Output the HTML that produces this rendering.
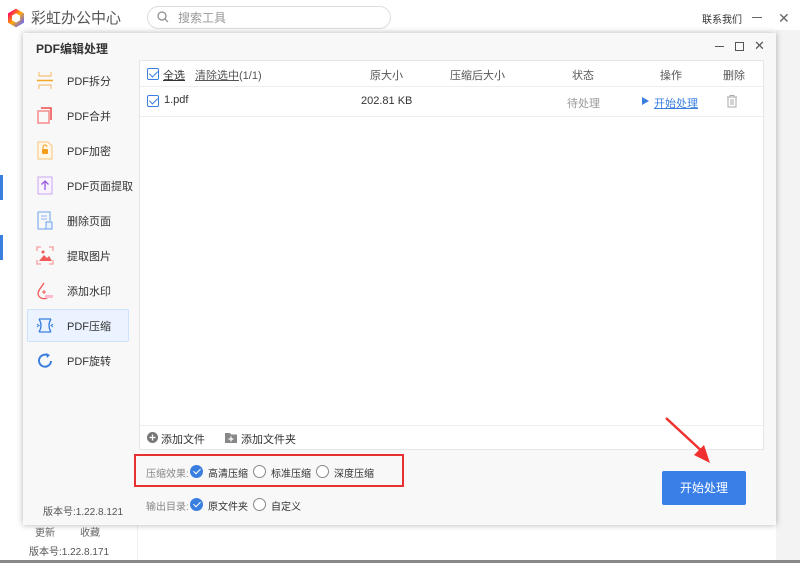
<!DOCTYPE html>
<html><head><meta charset="utf-8"><style>
*{margin:0;padding:0;box-sizing:border-box}
body{width:800px;height:563px;overflow:hidden;background:#fff;font-family:"Liberation Sans","Noto Sans CJK SC",sans-serif;font-size:11px;color:#333;position:relative}
.a{position:absolute;white-space:nowrap}
.cb{position:absolute;width:12px;height:12px;border:1px solid #3a7fe0;border-radius:2px;background:#fff}
.cb:after{content:"";position:absolute;left:3px;top:0px;width:4px;height:7px;border:solid #3a7fe0;border-width:0 1.5px 1.5px 0;transform:rotate(45deg)}
.rc{position:absolute;width:13px;height:13px;border-radius:50%;background:#3a7fe0}
.rc:after{content:"";position:absolute;left:4.5px;top:2px;width:3px;height:6px;border:solid #fff;border-width:0 1.5px 1.5px 0;transform:rotate(45deg)}
.ro{position:absolute;width:13px;height:13px;border-radius:50%;border:1px solid #888;background:#fff}
.it{position:absolute;left:27px;width:102px;height:33px}
.it span{position:absolute;left:40px;top:9px;font-size:11px;color:#333;white-space:nowrap}
.ic{position:absolute;left:9px;top:7px;width:18px;height:19px}
</style></head><body>
<svg class="a" style="left:6px;top:8px" width="20" height="20" viewBox="0 0 20 20"><path d="M10 3 L16 6.5 L16 13.5 L10 17 L4 13.5 L4 6.5Z" fill="none" stroke="url(#g)" stroke-width="4"/><defs><linearGradient id="g" x1="0" y1="0" x2="1" y2="1"><stop offset="0" stop-color="#f06"/><stop offset=".5" stop-color="#fa0"/><stop offset="1" stop-color="#66f"/></linearGradient></defs></svg>
<div class="a" style="left:31px;top:7px;font-size:15px;color:#555">彩虹办公中心</div>
<div class="a" style="left:147px;top:6px;width:244px;height:23px;border:1px solid #ddd;border-radius:12px"></div>
<svg class="a" style="left:157px;top:11px" width="12" height="12"><circle cx="5" cy="5" r="4" fill="none" stroke="#888" stroke-width="1.2"/><line x1="8" y1="8" x2="11" y2="11" stroke="#888" stroke-width="1.2"/></svg>
<div class="a" style="left:178px;top:9px;font-size:12px;color:#999">搜索工具</div>
<div class="a" style="left:702px;top:11px;font-size:10px;color:#333">联系我们</div>
<div class="a" style="left:752px;top:17px;width:10px;height:1px;background:#666"></div>
<div class="a" style="left:778px;top:10px;font-size:14px;color:#666">✕</div>
<div class="a" style="left:0;top:175px;width:3px;height:25px;background:#3a7fe0"></div>
<div class="a" style="left:0;top:235px;width:3px;height:25px;background:#3a7fe0"></div>
<div class="a" style="left:35px;top:524px;font-size:10px;color:#666">更新</div>
<div class="a" style="left:80px;top:524px;font-size:10px;color:#666">收藏</div>
<div class="a" style="left:29px;top:543px;font-size:10px;color:#555">版本号:1.22.8.171</div>
<div class="a" style="left:137px;top:520px;width:1px;height:43px;background:#eee"></div>
<div class="a" style="left:776px;top:30px;width:24px;height:533px;background:#f3f3f3"></div>
<div class="a" style="left:0;top:560px;width:800px;height:3px;background:#888"></div>
<div class="a" style="left:23px;top:33px;width:753px;height:492px;background:#f8f8f8;box-shadow:0 0 6px rgba(0,0,0,.3)"></div>
<div class="a" style="left:36px;top:40px;font-size:12px;font-weight:bold;color:#333">PDF编辑处理</div>
<div class="a" style="left:715px;top:46px;width:9px;height:1px;background:#555"></div>
<div class="a" style="left:735px;top:42px;width:9px;height:9px;border:1px solid #555"></div>
<div class="a" style="left:754px;top:38px;font-size:13px;color:#555">✕</div>
<div class="it" style="top:64px"><svg class="ic" viewBox="0 0 18 19"><path d="M3 1v4h12V1M3 18v-4h12v4" fill="none" stroke="#f5c27a" stroke-width="1.2"/><line x1="1" y1="9.5" x2="17" y2="9.5" stroke="#f5a623" stroke-width="1.5"/></svg><span>PDF拆分</span></div>
<div class="it" style="top:99px"><svg class="ic" viewBox="0 0 18 19"><rect x="2" y="5" width="11" height="12" fill="none" stroke="#f48b8b" stroke-width="1.5"/><path d="M5 2h10v12" fill="none" stroke="#f04a4a" stroke-width="1.5"/></svg><span>PDF合并</span></div>
<div class="it" style="top:134px"><svg class="ic" viewBox="0 0 18 19"><path d="M2 1h10l4 4v13H2z" fill="#fff7e8" stroke="#f7c37a"/><rect x="6" y="8" width="6" height="5" rx="1" fill="#f59c1a"/><path d="M7 8V6a2 2 0 014 0" fill="none" stroke="#f59c1a"/></svg><span>PDF加密</span></div>
<div class="it" style="top:169px"><svg class="ic" viewBox="0 0 18 19"><rect x="2" y="1" width="14" height="17" fill="#f8f3ff" stroke="#c8a8f0"/><path d="M9 14V5M5.5 8.5L9 5l3.5 3.5" fill="none" stroke="#9b59e0" stroke-width="1.3"/></svg><span>PDF页面提取</span></div>
<div class="it" style="top:204px"><svg class="ic" viewBox="0 0 18 19"><path d="M2 1h12v9M2 1v17h8" fill="none" stroke="#8ab4f0" stroke-width="1.3"/><path d="M5 5h6M5 8h6" stroke="#8ab4f0"/><rect x="10" y="11" width="6" height="7" fill="#eaf2ff" stroke="#6aa0ec"/></svg><span>删除页面</span></div>
<div class="it" style="top:239px"><svg class="ic" viewBox="0 0 18 19"><path d="M1 5V1h4M13 1h4v4M17 14v4h-4M5 18H1v-4" fill="none" stroke="#f6a0a0" stroke-width="1.3"/><path d="M3 15l5-6 3 3 2-2 3 5z" fill="#f05a5a"/><circle cx="7" cy="6" r="1.5" fill="#f05a5a"/></svg><span>提取图片</span></div>
<div class="it" style="top:274px"><svg class="ic" viewBox="0 0 18 19"><path d="M8 2C5 7 2 9 2 13a6 6 0 0010 3" fill="none" stroke="#f05a5a" stroke-width="1.3"/><path d="M6 11h4M8 9v4" stroke="#f05a5a"/><path d="M9 14h8v3H9z" fill="#fbc" /></svg><span>添加水印</span></div>
<div class="it" style="top:309px;background:#eaf3ff;border:1px solid #cfe2fb;border-radius:2px"><svg class="ic" style="left:8px;top:6px" viewBox="0 0 18 19"><path d="M3 3h12M3 16h12M3 3q4 6.5 0 13M15 3q-4 6.5 0 13" fill="none" stroke="#3a7fe0" stroke-width="1.3"/><path d="M1 8l2 1.5L1 11M17 8l-2 1.5 2 1.5" fill="none" stroke="#3a7fe0"/></svg><span style="left:39px;top:8px">PDF压缩</span></div>
<div class="it" style="top:344px"><svg class="ic" viewBox="0 0 18 19"><path d="M15 10a6 6 0 11-3-5.5" fill="none" stroke="#3a7fe0" stroke-width="2"/><path d="M10 2l4 2-3 3z" fill="#3a7fe0"/></svg><span>PDF旋转</span></div>
<div class="a" style="left:43px;top:503px;font-size:10px;color:#555">版本号:1.22.8.121</div>
<div class="a" style="left:139px;top:60px;width:625px;height:390px;background:#fff;border:1px solid #e6e6e6"></div>
<div class="a" style="left:140px;top:86px;width:623px;height:1px;background:#eee"></div>
<div class="a" style="left:140px;top:116px;width:623px;height:1px;background:#eee"></div>
<div class="a" style="left:140px;top:425px;width:623px;height:1px;background:#eee"></div>
<div class="cb" style="left:147px;top:68px"></div>
<div class="a" style="left:163px;top:67px;text-decoration:underline;color:#333">全选</div>
<div class="a" style="left:195px;top:67px;color:#555"><u>清除选中</u>(1/1)</div>
<div class="a" style="left:370px;top:67px;color:#555">原大小</div>
<div class="a" style="left:450px;top:67px;color:#555">压缩后大小</div>
<div class="a" style="left:572px;top:67px;color:#555">状态</div>
<div class="a" style="left:660px;top:67px;color:#555">操作</div>
<div class="a" style="left:723px;top:67px;color:#555">删除</div>
<div class="cb" style="left:147px;top:95px"></div>
<div class="a" style="left:164px;top:94px;color:#333">1.pdf</div>
<div class="a" style="left:361px;top:95px;color:#333">202.81 KB</div>
<div class="a" style="left:567px;top:95px;color:#999">待处理</div>
<div class="a" style="left:642px;top:97px;width:0;height:0;border-left:7px solid #3a7fe0;border-top:4.5px solid transparent;border-bottom:4.5px solid transparent"></div>
<div class="a" style="left:654px;top:95px;color:#3a7fe0;text-decoration:underline">开始处理</div>
<svg class="a" style="left:726px;top:95px" width="12" height="13"><path d="M1 2h10M4 2V0.5h4V2M2 2v10h8V2M5 4v6M7 4v6" fill="none" stroke="#aaa"/></svg>
<svg class="a" style="left:147px;top:432px" width="11" height="11"><circle cx="5.5" cy="5.5" r="5.5" fill="#777"/><path d="M5.5 2.5v6M2.5 5.5h6" stroke="#fff" stroke-width="1.3"/></svg>
<div class="a" style="left:161px;top:431px;color:#333">添加文件</div>
<svg class="a" style="left:225px;top:432px" width="12" height="11"><path d="M0 1h5l1 1.5h6V11H0z" fill="#888"/><path d="M6 4.5v5M3.5 7h5" stroke="#fff" stroke-width="1.2"/></svg>
<div class="a" style="left:241px;top:431px;color:#333">添加文件夹</div>
<div class="a" style="left:134px;top:454px;width:270px;height:33px;border:2px solid #e83030"></div>
<div class="a" style="left:146px;top:465px;font-size:10px;color:#888">压缩效果:</div>
<div class="rc" style="left:190px;top:465px"></div>
<div class="a" style="left:208px;top:465px;font-size:10px">高清压缩</div>
<div class="ro" style="left:253px;top:465px"></div>
<div class="a" style="left:271px;top:465px;font-size:10px">标准压缩</div>
<div class="ro" style="left:316px;top:465px"></div>
<div class="a" style="left:334px;top:465px;font-size:10px">深度压缩</div>
<div class="a" style="left:146px;top:498px;font-size:10px;color:#888">输出目录:</div>
<div class="rc" style="left:190px;top:498px"></div>
<div class="a" style="left:208px;top:498px;font-size:10px">原文件夹</div>
<div class="ro" style="left:253px;top:498px"></div>
<div class="a" style="left:271px;top:498px;font-size:10px">自定义</div>
<div class="a" style="left:662px;top:471px;width:84px;height:34px;background:#3a7fe8;border-radius:2px;color:#fff;font-size:12px;text-align:center;line-height:34px">开始处理</div>
<svg class="a" style="left:660px;top:415px" width="55" height="50"><line x1="6" y1="3" x2="46" y2="40" stroke="#f03030" stroke-width="2.5"/><path d="M50 48L34 40 44 30z" fill="#f03030"/></svg>
</body></html>
